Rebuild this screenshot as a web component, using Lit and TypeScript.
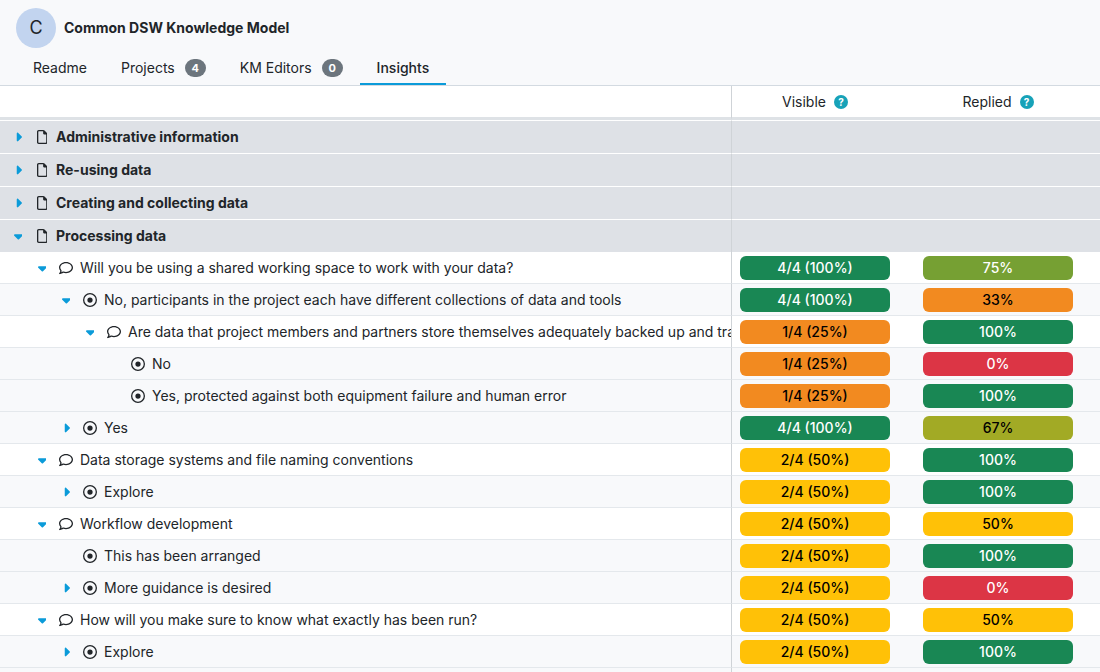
import { LitElement, html, css, svg, nothing } from "lit";
import { customElement, property, state } from "lit/decorators.js";
import { classMap } from "lit/directives/class-map.js";
import { styleMap } from "lit/directives/style-map.js";

type Kind = "chapter" | "question" | "answer";
type Toggle = "open" | "closed" | "none";

interface TreeRow {
  kind: Kind;
  level: number;
  toggle: Toggle;
  label: string;
  visible?: string;
  visibleTone?: string;
  replied?: string;
  repliedTone?: string;
}

const chapter = (label: string, toggle: Toggle): TreeRow => ({ kind: "chapter", level: 0, toggle, label });

const item = (
  kind: Kind,
  level: number,
  toggle: Toggle,
  label: string,
  visible: string,
  visibleTone: string,
  replied: string,
  repliedTone: string
): TreeRow => ({ kind, level, toggle, label, visible, visibleTone, replied, repliedTone });

const ROWS: TreeRow[] = [
  chapter("Administrative information", "closed"),
  chapter("Re-using data", "closed"),
  chapter("Creating and collecting data", "closed"),
  chapter("Processing data", "open"),
  item("question", 1, "open", "Will you be using a shared working space to work with your data?", "4/4 (100%)", "green", "75%", "lime"),
  item("answer", 2, "open", "No, participants in the project each have different collections of data and tools", "4/4 (100%)", "green", "33%", "orange"),
  item("question", 3, "open", "Are data that project members and partners store themselves adequately backed up and traceable?", "1/4 (25%)", "orange", "100%", "green"),
  item("answer", 4, "none", "No", "1/4 (25%)", "orange", "0%", "red"),
  item("answer", 4, "none", "Yes, protected against both equipment failure and human error", "1/4 (25%)", "orange", "100%", "green"),
  item("answer", 2, "closed", "Yes", "4/4 (100%)", "green", "67%", "olive"),
  item("question", 1, "open", "Data storage systems and file naming conventions", "2/4 (50%)", "yellow", "100%", "green"),
  item("answer", 2, "closed", "Explore", "2/4 (50%)", "yellow", "100%", "green"),
  item("question", 1, "open", "Workflow development", "2/4 (50%)", "yellow", "50%", "yellow"),
  item("answer", 2, "none", "This has been arranged", "2/4 (50%)", "yellow", "100%", "green"),
  item("answer", 2, "closed", "More guidance is desired", "2/4 (50%)", "yellow", "0%", "red"),
  item("question", 1, "open", "How will you make sure to know what exactly has been run?", "2/4 (50%)", "yellow", "50%", "yellow"),
  item("answer", 2, "closed", "Explore", "2/4 (50%)", "yellow", "100%", "green"),
];

const ICONS: Record<string, { width: number; path: string }> = {
  closed: {
    width: 256,
    path: "M246.6 278.6c12.5-12.5 12.5-32.8 0-45.3l-128-128c-9.2-9.2-22.9-11.9-34.9-6.9s-19.8 16.6-19.8 29.6l0 256c0 12.9 7.8 24.6 19.8 29.6s25.7 2.2 34.9-6.9l128-128z",
  },
  open: {
    width: 320,
    path: "M137.4 374.6c12.5 12.5 32.8 12.5 45.3 0l128-128c9.2-9.2 11.9-22.9 6.9-34.9s-16.6-19.8-29.6-19.8L32 192c-12.9 0-24.6 7.8-29.6 19.8s-2.2 25.7 6.9 34.9l128 128z",
  },
  chapter: {
    width: 384,
    path: "M320 464c8.8 0 16-7.2 16-16l0-288-80 0c-17.7 0-32-14.3-32-32l0-80L64 48c-8.8 0-16 7.2-16 16l0 384c0 8.8 7.2 16 16 16l256 0zM0 64C0 28.7 28.7 0 64 0L229.5 0c17 0 33.3 6.7 45.3 18.7l90.5 90.5c12 12 18.7 28.3 18.7 45.3L384 448c0 35.3-28.7 64-64 64L64 512c-35.3 0-64-28.7-64-64L0 64z",
  },
  question: {
    width: 512,
    path: "M123.6 391.3c12.9-9.4 29.6-11.8 44.6-6.4c26.5 9.6 56.2 15.1 87.8 15.1c124.7 0 208-80.5 208-160s-83.3-160-208-160S48 160.5 48 240c0 32 12.4 62.8 35.7 89.2c8.6 9.7 12.8 22.5 11.8 35.5c-1.4 18.1-5.7 34.7-11.3 49.4c17-7.9 31.1-16.7 39.4-22.7zM21.2 431.9c1.8-2.7 3.5-5.4 5.1-8.1c10-16.6 19.5-38.4 21.4-62.9C17.7 326.8 0 285.1 0 240C0 125.1 114.6 32 256 32s256 93.1 256 208s-114.6 208-256 208c-37.1 0-72.3-6.4-104.1-17.9c-11.9 8.7-31.3 20.6-54.3 30.6c-15.1 6.6-32.3 12.6-50.1 16.1c-.8 .2-1.6 .3-2.4 .5c-4.4 .8-8.7 1.5-13.2 1.9c-.2 0-.5 .1-.7 .1c-5.1 .5-10.2 .8-15.3 .8c-6.5 0-12.3-3.9-14.8-9.9c-2.5-6-1.1-12.8 3.4-17.4c4.1-4.2 7.8-8.7 11.3-13.5c1.7-2.3 3.3-4.6 4.8-6.9l.3-.5z",
  },
  answer: {
    width: 512,
    path: "M464 256A208 208 0 1 0 48 256a208 208 0 1 0 416 0zM0 256a256 256 0 1 1 512 0A256 256 0 1 1 0 256zm256-96a96 96 0 1 1 0 192 96 96 0 1 1 0-192z",
  },
};

const icon = (name: string) => html`<svg class="icon" viewBox="0 0 ${ICONS[name].width} 512" aria-hidden="true">
  ${svg`<path fill="currentColor" d=${ICONS[name].path}></path>`}
</svg>`;

@customElement("page-header")
class PageHeader extends LitElement {
  @state() private active = "Insights";

  private tabs: { label: string; count?: number }[] = [
    { label: "Readme" },
    { label: "Projects", count: 4 },
    { label: "KM Editors", count: 0 },
    { label: "Insights" },
  ];

  static styles = css`
    :host {
      display: block;
      background: #f8f9fb;
      border-bottom: 1px solid #d3dae1;
      padding: 8px 16px 0;
    }
    .title {
      display: flex;
      align-items: center;
      gap: 8px;
    }
    .avatar {
      display: grid;
      place-items: center;
      width: 40px;
      height: 40px;
      border-radius: 50%;
      background: #c2d4ef;
      font-size: 18px;
    }
    h1 {
      margin: 0;
      font-size: 14px;
      font-weight: 700;
    }
    nav {
      display: flex;
      margin-top: 2px;
    }
    .tab {
      display: flex;
      align-items: center;
      gap: 10px;
      height: 35px;
      box-sizing: border-box;
      padding: 2px 17px 0;
      border-bottom: 2px solid transparent;
      color: inherit;
      text-decoration: none;
    }
    .tab.active {
      border-bottom-color: #0b9bd9;
      font-weight: 500;
    }
    .badge {
      min-width: 21px;
      box-sizing: border-box;
      border-radius: 9px;
      background: #6c757d;
      color: #fff;
      font-size: 11px;
      font-weight: 700;
      line-height: 18px;
      text-align: center;
    }
  `;

  render() {
    return html`
      <div class="title">
        <span class="avatar">C</span>
        <h1>Common DSW Knowledge Model</h1>
      </div>
      <nav>
        ${this.tabs.map(
          (tab) => html`<a
            class=${classMap({ tab: true, active: tab.label === this.active })}
            href="#"
            @click=${(e: Event) => {
              e.preventDefault();
              this.active = tab.label;
            }}
            >${tab.label}${tab.count === undefined ? nothing : html`<span class="badge">${tab.count}</span>`}</a
          >`
        )}
      </nav>
    `;
  }
}

@customElement("insights-table")
class InsightsTable extends LitElement {
  @property({ attribute: false }) rows: TreeRow[] = [];

  static styles = css`
    :host {
      display: block;
      overflow: hidden;
    }
    table {
      width: 100%;
      table-layout: fixed;
      border-collapse: separate;
      border-spacing: 0;
    }
    .col-visible {
      width: 183px;
    }
    .col-replied {
      width: 185px;
    }
    th,
    td {
      box-sizing: border-box;
      padding: 0;
      font-weight: 400;
      text-align: left;
    }
    .name {
      border-right: 1px solid #cfd3d7;
      overflow: hidden;
    }
    .visible {
      padding: 0 25px 0 8px;
    }
    .replied {
      padding: 0 27px 0 8px;
    }
    .head th {
      height: 34px;
      border-bottom: 3px solid #dee2e6;
    }
    .heading {
      display: flex;
      align-items: center;
      justify-content: center;
      gap: 8px;
    }
    .help {
      display: grid;
      place-items: center;
      width: 14px;
      height: 14px;
      padding: 0;
      border: 0;
      border-radius: 50%;
      background: #17a2b8;
      color: #fff;
      font: 700 10px/14px Inter, sans-serif;
    }
    .chapter th,
    .chapter td {
      height: 33px;
      border-top: 1px solid #fff;
      background: #dee1e6;
    }
    .chapter .label {
      font-weight: 700;
    }
    .question th,
    .question td,
    .answer th,
    .answer td {
      height: 32px;
      border-bottom: 1px solid #e4e8ec;
    }
    .answer th,
    .answer td {
      background: #f8f9fb;
    }
    .entry {
      display: flex;
      align-items: center;
      white-space: nowrap;
    }
    .caret {
      display: grid;
      place-items: center;
      flex: none;
      width: 12px;
      height: 24px;
      margin-right: 11px;
      padding: 0;
      border: 0;
      background: none;
      color: #0b9bd9;
    }
    .kind {
      display: grid;
      place-items: center;
      flex: none;
      width: 14px;
      margin-right: 7px;
    }
    .icon {
      display: block;
      height: 14px;
    }
    .pill {
      border-radius: 6px;
      font-weight: 500;
      line-height: 24px;
      text-align: center;
      color: #000;
    }
    .green {
      background: #198754;
      color: #fff;
    }
    .lime {
      background: #76a033;
      color: #fff;
    }
    .olive {
      background: #a2aa25;
    }
    .yellow {
      background: #ffc107;
    }
    .orange {
      background: #f28a20;
    }
    .red {
      background: #dc3545;
      color: #fff;
    }
  `;

  private renderRow(row: TreeRow) {
    return html`<tr class=${row.kind}>
      <th class="name" scope="row">
        <div class="entry" style=${styleMap({ paddingLeft: `${12 + row.level * 24}px` })}>
          ${row.toggle === "none"
            ? html`<span class="caret"></span>`
            : html`<button class="caret" aria-expanded=${row.toggle === "open"}>${icon(row.toggle)}</button>`}
          <span class="kind">${icon(row.kind)}</span>
          <span class="label">${row.label}</span>
        </div>
      </th>
      <td class="visible">${row.visible ? html`<div class="pill ${row.visibleTone}">${row.visible}</div>` : nothing}</td>
      <td class="replied">${row.replied ? html`<div class="pill ${row.repliedTone}">${row.replied}</div>` : nothing}</td>
    </tr>`;
  }

  render() {
    return html`<table>
      <colgroup>
        <col />
        <col class="col-visible" />
        <col class="col-replied" />
      </colgroup>
      <thead>
        <tr class="head">
          <th class="name"></th>
          <th class="visible" scope="col"><div class="heading">Visible <button class="help">?</button></div></th>
          <th class="replied" scope="col"><div class="heading">Replied <button class="help">?</button></div></th>
        </tr>
      </thead>
      <tbody>
        ${this.rows.map((row) => this.renderRow(row))}
        <tr class="answer">
          <td class="name"></td>
          <td class="visible"></td>
          <td class="replied"></td>
        </tr>
      </tbody>
    </table>`;
  }
}

@customElement("app-root")
class AppRoot extends LitElement {
  static styles = css`
    :host {
      display: flex;
      flex-direction: column;
      height: 100vh;
      overflow: hidden;
      background: #fff;
      color: #212529;
      font-family: Inter, "Liberation Sans", sans-serif;
      font-size: 14px;
      line-height: 20px;
    }
    .header {
      flex: none;
    }
    .table {
      flex: 1;
      min-height: 0;
    }
  `;

  render() {
    return html`
      <page-header class="header"></page-header>
      <insights-table class="table" .rows=${ROWS}></insights-table>
    `;
  }
}
